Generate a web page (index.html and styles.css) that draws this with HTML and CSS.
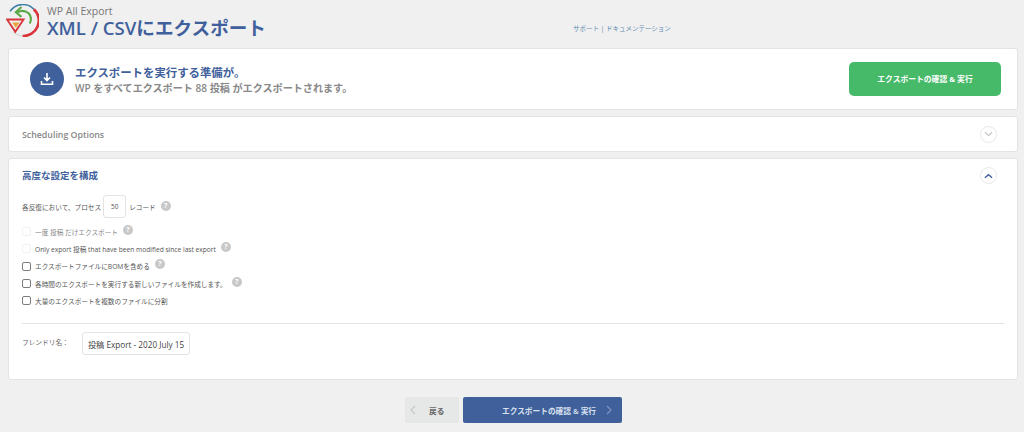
FILE: index.html
```html
<!DOCTYPE html>
<html lang="ja">
<head>
<meta charset="utf-8">
<title>XML / CSVにエクスポート</title>
<link rel="stylesheet" href="styles.css">
</head>
<body>
<header class="top">
  <svg class="logo" viewBox="0 0 32 32" width="33" height="33">
    <path d="M4 7 A15 15 0 0 1 27 5" fill="none" stroke="#3f7fa8" stroke-width="1.6"/>
    <path d="M27 5 A15 15 0 0 1 16 31" fill="none" stroke="#d8343a" stroke-width="2.6"/>
    <path d="M16 31 A15 15 0 0 1 7 27" fill="none" stroke="#d4d4d4" stroke-width="1.2"/>
    <path d="M23 19 A9 9 0 0 0 22 9 A10 10 0 0 0 11 8" fill="none" stroke="#5aa845" stroke-width="2"/>
    <path d="M15 3 L9.5 8 L15 12.5" fill="none" stroke="#5aa845" stroke-width="2"/>
    <path d="M1 15 L17 15 L9 27 Z" fill="none" stroke="#d8343a" stroke-width="1.8"/>
    <path d="M6 18 L13 18 L9.5 23 Z" fill="#e8a33a"/>
  </svg>
  <div class="titles">
    <div class="brand">WP All Export</div>
    <h1>XML / CSVにエクスポート</h1>
  </div>
  <nav class="links">サポート | ドキュメンテーション</nav>
</header>

<section class="card ready">
  <div class="round">
    <svg viewBox="0 0 16 16" width="16" height="16"><path d="M8 2v7M5 6.5L8 9.5l3-3M2.5 10v3.2h11V10" fill="none" stroke="#fff" stroke-width="1.6"/></svg>
  </div>
  <div class="ready-text">
    <h2>エクスポートを実行する準備が。</h2>
    <p>WP をすべてエクスポート 88 投稿 がエクスポートされます。</p>
  </div>
  <button class="run">エクスポートの確認 &amp; 実行</button>
</section>

<section class="card sched">
  <h3 class="muted">Scheduling Options</h3>
  <span class="toggle"><svg viewBox="0 0 10 6" width="9" height="6"><path d="M1 1l4 3.5L9 1" fill="none" stroke="#c4c4c4" stroke-width="1.3"/></svg></span>
</section>

<section class="card adv">
  <div class="adv-head">
    <h3>高度な設定を構成</h3>
    <span class="toggle"><svg viewBox="0 0 10 6" width="9" height="6"><path d="M1 5l4-3.5L9 5" fill="none" stroke="#40609c" stroke-width="1.5"/></svg></span>
  </div>
  <div class="records">各反復において、プロセス<span class="num">50</span>レコード<i class="help">?</i></div>
  <div class="opt o1"><span class="box off"></span><span class="dim">一度 投稿 だけエクスポート</span><i class="help">?</i></div>
  <div class="opt o2"><span class="box off"></span><span>Only export 投稿 that have been modified since last export</span><i class="help">?</i></div>
  <div class="opt o3"><span class="box"></span><span>エクスポートファイルにBOMを含める</span><i class="help">?</i></div>
  <div class="opt o4"><span class="box"></span><span>各時間のエクスポートを実行する新しいファイルを作成します。</span><i class="help">?</i></div>
  <div class="opt o5"><span class="box"></span><span>大量のエクスポートを複数のファイルに分割</span></div>
  <hr>
  <div class="friendly"><label>フレンドリ名：</label><span class="name">投稿 Export - 2020 July 15</span></div>
</section>

<footer class="actions">
  <button class="back"><svg viewBox="0 0 6 10" width="6" height="10"><path d="M5 1L1 5l4 4" fill="none" stroke="#c4c8c8" stroke-width="1.2"/></svg><span>戻る</span></button>
  <button class="confirm"><span>エクスポートの確認 &amp; 実行</span><svg viewBox="0 0 6 10" width="6" height="10"><path d="M1 1l4 4-4 4" fill="none" stroke="#7f93bd" stroke-width="1.2"/></svg></button>
</footer>
</body>
</html>
```

FILE: styles.css
```css
* { box-sizing: border-box; }
html, body { margin: 0; height: 432px; overflow: hidden; }
body {
  background: #f0f0f0;
  font-family: "Open Sans", "Noto Sans CJK JP", sans-serif;
  color: #555;
  padding: 0 6px 0 8px;
}
.top { height: 48px; display: flex; align-items: flex-start; }
.logo { margin: 4px 0 0 -2px; flex: none; }
.titles { margin-left: 8px; padding-top: 5px; width: 526px; flex: none; }
.brand { font-size: 10.5px; line-height: 12px; color: #777; }
h1 { margin: 0; font-size: 18.6px; line-height: 21px; font-weight: 600; color: #40609c; white-space: nowrap; }
.links { margin: 23px 0 0; font-size: 6.5px; line-height: 12px; color: #5f8bb0; white-space: nowrap; }
.card {
  background: #fff;
  border: 1px solid #e3e3e3;
  border-radius: 3px;
}
.ready { height: 62px; display: flex; align-items: center; padding: 0 16px 0 21px; }
.round {
  width: 34px; height: 34px; border-radius: 50%;
  background: #40609c;
  display: flex; align-items: center; justify-content: center;
  flex: none;
}
.ready-text { margin-left: 11px; flex: 1; padding-top: 2px; }
h2 { margin: 0; font-size: 11.4px; line-height: 16px; font-weight: 700; color: #40609c; }
.ready-text p { margin: 0; font-size: 10.1px; line-height: 14px; font-weight: 600; color: #888; }
.run {
  width: 152px; height: 34px; margin-top: -1px;
  background: #46ba69; color: #fff;
  border: 0; border-radius: 5px;
  font: 700 7.8px "Open Sans", "Noto Sans CJK JP", sans-serif;
}
.sched { margin-top: 6px; height: 36px; display: flex; align-items: center; justify-content: space-between; padding: 0 20px 0 13px; }
h3 { margin: 0; font-size: 9.5px; line-height: 14px; font-weight: 600; color: #40609c; }
h3.muted { color: #888; font-size: 8.8px; font-weight: 600; padding-top: 2px; }
.toggle {
  width: 17px; height: 17px; border-radius: 50%;
  background: #fff; border: 1px solid #e8e8e8;
  display: flex; align-items: center; justify-content: center;
}
.adv { margin-top: 6px; height: 222px; padding: 0 13px; }
.adv-head { height: 33px; margin-bottom: 2px; display: flex; align-items: center; justify-content: space-between; padding-right: 7px; }
.records { height: 25px; display: flex; align-items: center; font-size: 6.65px; color: #555; }
.num {
  width: 23px; height: 23px; margin: 0 3px 0 2px;
  border: 1px solid #e3e3e3; border-radius: 3px;
  display: flex; align-items: center; justify-content: center;
  font-size: 6.5px; font-weight: 400;
}
.help {
  width: 10px; height: 10px; border-radius: 50%;
  background: #c8c8c8; color: #fff;
  font: normal 700 7px/10px "Open Sans", sans-serif;
  text-align: center;
  margin-left: 5px;
  margin-top: -2px;
  flex: none;
}
.opt { display: flex; align-items: center; height: 17.3px; font-size: 6.65px; color: #555; white-space: nowrap; }
.opt.o1 { margin-top: 4px; }
.opt .help { margin-left: 5px; margin-top: -4px; }
.box {
  width: 9px; height: 9px; margin-right: 4px; flex: none;
  border: 1px solid #7d7d7d; border-radius: 2px; background: #fff;
}
.box.off { border-color: #f0f0f0; }
.dim { color: #888; }
hr { border: 0; border-top: 1px solid #e3e3e3; margin: 14px 0 0; }
.friendly { margin-top: 8px; display: flex; align-items: center; }
.friendly label { width: 60px; font-size: 6.7px; color: #666; margin-top: -3px; }
.name {
  width: 108px; height: 23px;
  border: 1px solid #e3e3e3; border-radius: 3px;
  display: flex; align-items: center; justify-content: center;
  font-size: 8.2px; color: #444; white-space: nowrap;
}
.actions { margin-top: 17px; display: flex; justify-content: center; gap: 4px; padding-left: 1px; }
.actions button { height: 26px; border: 0; border-radius: 2px; font: 600 7.7px "Open Sans", "Noto Sans CJK JP", sans-serif; display: flex; align-items: center; padding: 0; }
.back { width: 54px; background: #e6e7e7; color: #666; padding-left: 3px !important; }
.back span { margin-left: 13px; }
.confirm { width: 159px; background: #40609c; color: #d9e0ee; }
.confirm span { margin-left: 39px; }
.confirm svg { margin-left: 10px; }
.back svg { margin-left: 2px; }
```
